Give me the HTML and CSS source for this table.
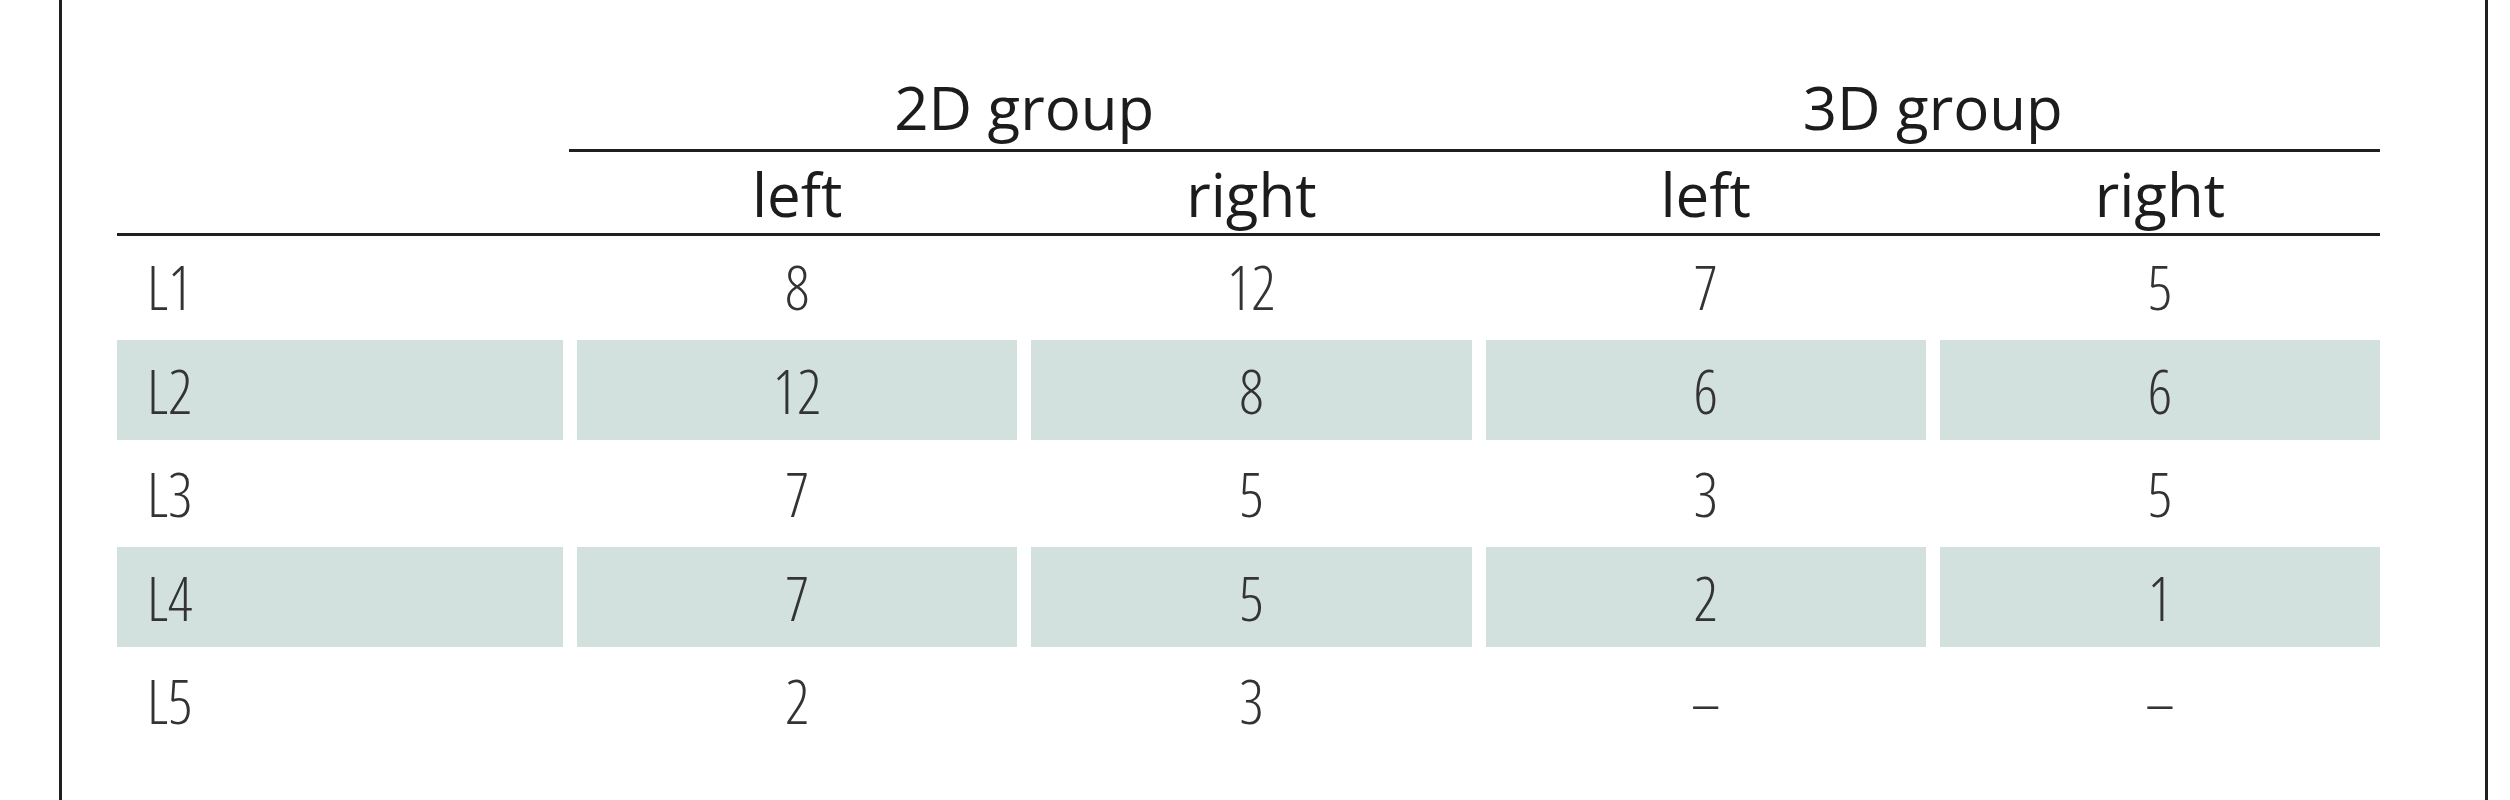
FILE: index.html
```html
<!DOCTYPE html>
<html lang="en">
<head>
<meta charset="utf-8">
<title>Table</title>
<link rel="stylesheet" href="styles.css">
</head>
<body>
<div class="frame">
  <div class="table">
    <div class="h-empty"></div>
    <div class="h-group g2d">2D group</div>
    <div class="h-group g3d">3D group</div>
    <div class="h-rule"></div>

    <div class="h-sub col2">left</div>
    <div class="h-sub col3">right</div>
    <div class="h-sub col4">left</div>
    <div class="h-sub col5">right</div>
    <div class="s-rule"></div>

    <div class="c label">L1</div>
    <div class="c">8</div>
    <div class="c">12</div>
    <div class="c">7</div>
    <div class="c">5</div>

    <div class="c label shade">L2</div>
    <div class="c shade">12</div>
    <div class="c shade">8</div>
    <div class="c shade">6</div>
    <div class="c shade">6</div>

    <div class="c label">L3</div>
    <div class="c">7</div>
    <div class="c">5</div>
    <div class="c">3</div>
    <div class="c">5</div>

    <div class="c label shade">L4</div>
    <div class="c shade">7</div>
    <div class="c shade">5</div>
    <div class="c shade">2</div>
    <div class="c shade">1</div>

    <div class="c label">L5</div>
    <div class="c">2</div>
    <div class="c">3</div>
    <div class="c">–</div>
    <div class="c">–</div>
  </div>
</div>
</body>
</html>
```
FILE: styles.css
```css
html, body {
  margin: 0;
  padding: 0;
  background: #ffffff;
}

body {
  font-family: "Open Sans", "Liberation Sans", sans-serif;
  color: #1c1c1c;
}

.frame {
  margin-left: 59px;
  width: 2368px;
  height: 800px;
  border-left: 3px solid #1f1f1f;
  border-right: 3px solid #1f1f1f;
  padding-left: 55px;
  box-sizing: content-box;
}

.table {
  width: 2263px;
  display: grid;
  grid-template-columns: 446px repeat(4, 1fr);
  column-gap: 14px;
  grid-template-rows: 152px 84px repeat(5, 103.5px);
}

.h-empty {
  grid-column: 1;
  grid-row: 1;
}

.h-group {
  grid-row: 1;
  font-size: 60px;
  line-height: 60px;
  text-align: center;
  padding-top: 77px;
  box-sizing: border-box;
}

.g2d { grid-column: 2 / span 2; }
.g3d { grid-column: 4 / span 2; }

.h-rule {
  grid-column: 2 / span 4;
  grid-row: 1;
  align-self: end;
  height: 3px;
  background: #1f1f1f;
  margin-left: -8px;
}

.h-sub {
  grid-row: 2;
  font-size: 60px;
  line-height: 60px;
  text-align: center;
  padding-top: 12px;
  box-sizing: border-box;
}

.col2 { grid-column: 2; }
.col3 { grid-column: 3; }
.col4 { grid-column: 4; }
.col5 { grid-column: 5; }

.s-rule {
  grid-column: 1 / -1;
  grid-row: 2;
  align-self: end;
  height: 3px;
  background: #1f1f1f;
}

.c {
  align-self: start;
  height: 100px;
  font-size: 60px;
  line-height: 100px;
  font-weight: 300;
  font-stretch: 75%;
  color: #333333;
  text-align: center;
  padding-top: 1px;
  box-sizing: border-box;
}

.c.label {
  text-align: left;
  padding-left: 30px;
}

.shade {
  background: #d3e1de;
}
```
